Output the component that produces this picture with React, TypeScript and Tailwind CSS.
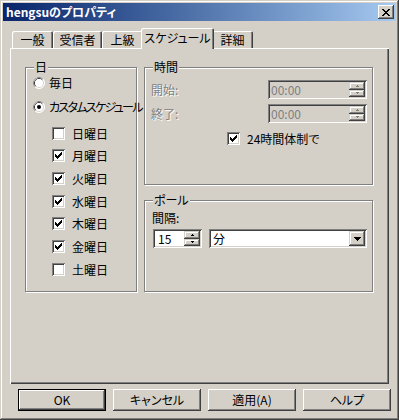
import React from "react";

const RAISED =
  "shadow-[inset_-1px_-1px_#404040,inset_1px_1px_#ffffff,inset_-2px_-2px_#808080,inset_2px_2px_#d4d0c8]";
const RAISED_SMALL =
  "shadow-[inset_-1px_-1px_#404040,inset_1px_1px_#d4d0c8,inset_-2px_-2px_#808080,inset_2px_2px_#ffffff]";
const SUNKEN =
  "shadow-[inset_1px_1px_#808080,inset_-1px_-1px_#ffffff,inset_2px_2px_#404040,inset_-2px_-2px_#d4d0c8]";

function Pixels({ rows, color }: { rows: string[]; color: string }) {
  const w = rows[0].length;
  const h = rows.length;
  const rects: React.ReactNode[] = [];
  rows.forEach((r, y) =>
    r.split("").forEach((c, x) => {
      if (c === "X") rects.push(<rect key={`${x}-${y}`} x={x} y={y} width={1} height={1} fill={color} />);
    })
  );
  return (
    <svg width={w} height={h} viewBox={`0 0 ${w} ${h}`} shapeRendering="crispEdges" className="block">
      {rects}
    </svg>
  );
}

const CHECK = ["......X", ".....XX", "X...XXX", "XX.XXX.", "XXXXX..", ".XXX...", "..X...."];
const CLOSE_X = ["XX....XX", ".XX..XX.", "..XXXX..", "...XX...", "..XXXX..", ".XX..XX.", "XX....XX"];
const DOWN = ["XXXXXXX", ".XXXXX.", "..XXX..", "...X..."];
const UP_TINY = [".X.", "XXX"];
const DOWN_TINY = ["XXX", ".X."];

function Checkbox({ checked }: { checked: boolean }) {
  return (
    <div className={`w-[13px] h-[13px] bg-white ${SUNKEN} flex items-center justify-center shrink-0`}>
      {checked && <Pixels rows={CHECK} color="#000000" />}
    </div>
  );
}

function Radio({ checked }: { checked: boolean }) {
  return (
    <svg width="12" height="12" viewBox="0 0 12 12" className="block shrink-0">
      <circle cx="6" cy="6" r="5.5" fill="#ffffff" stroke="#ffffff" strokeWidth="1" />
      <path d="M2.11 9.89 A5.5 5.5 0 0 1 9.89 2.11" fill="none" stroke="#808080" strokeWidth="1" />
      <circle cx="6" cy="6" r="4.5" fill="none" stroke="#d4d0c8" strokeWidth="1" />
      <path d="M2.82 9.18 A4.5 4.5 0 0 1 9.18 2.82" fill="none" stroke="#404040" strokeWidth="1" />
      <circle cx="6" cy="6" r="3.9" fill="#ffffff" />
      {checked && <circle cx="6" cy="6" r="2" fill="#000000" />}
    </svg>
  );
}

function Group({
  label,
  className,
  children,
}: {
  label: string;
  className: string;
  children?: React.ReactNode;
}) {
  return (
    <div className={`relative border border-[#808080] shadow-[inset_1px_1px_#ffffff,1px_1px_#ffffff] ${className}`}>
      <span className="absolute top-[-7px] left-[8px] bg-[#d4d0c8] px-[1px] leading-[12px]">{label}</span>
      {children}
    </div>
  );
}

function Spinner({ color }: { color: string }) {
  return (
    <div className="flex flex-col w-[16px] h-full shrink-0">
      <div className={`flex-1 bg-[#d4d0c8] ${RAISED_SMALL} flex items-center justify-center`}>
        <Pixels rows={UP_TINY} color={color} />
      </div>
      <div className={`flex-1 bg-[#d4d0c8] ${RAISED_SMALL} flex items-center justify-center`}>
        <Pixels rows={DOWN_TINY} color={color} />
      </div>
    </div>
  );
}

function TimeField() {
  return (
    <div className={`w-[99px] h-[19px] bg-[#d4d0c8] ${SUNKEN} flex items-stretch p-[2px]`}>
      <span className="flex-1 flex items-center pl-[1px] text-[#808080]">00:00</span>
      <Spinner color="#808080" />
    </div>
  );
}

const TABS = [
  { label: "一般", w: "w-[41px]" },
  { label: "受信者", w: "w-[49px]" },
  { label: "上級", w: "w-[41px]" },
  { label: "スケジュール", w: "w-[73px]", active: true },
  { label: "詳細", w: "w-[41px]" },
];

const DAYS = [
  { label: "日曜日", checked: false, h: "h-[22px]" },
  { label: "月曜日", checked: true, h: "h-[23px]" },
  { label: "火曜日", checked: true, h: "h-[23px]" },
  { label: "水曜日", checked: true, h: "h-[22px]" },
  { label: "木曜日", checked: true, h: "h-[23px]" },
  { label: "金曜日", checked: true, h: "h-[23px]" },
  { label: "土曜日", checked: false, h: "h-[23px]" },
];

export default function App() {
  return (
    <div
      className={`w-[399px] h-[420px] bg-[#d4d0c8] p-[3px] flex flex-col overflow-hidden select-none text-black text-[12px] leading-none font-['Noto_Sans_CJK_JP',sans-serif] [font-feature-settings:'palt'] ${RAISED_SMALL}`}
    >
      {/* Title bar */}
      <div className="h-[18px] flex items-center bg-linear-to-r from-[#0a246a] to-[#a6caf0] pl-[3px] pr-[2px] shrink-0">
        <span className="flex-1 text-white font-bold text-[12px] leading-none">hengsuのプロパティ</span>
        <div className={`w-[16px] h-[14px] bg-[#d4d0c8] ${RAISED} flex items-center justify-center`}>
          <Pixels rows={CLOSE_X} color="#000000" />
        </div>
      </div>

      {/* Tab strip */}
      <div className="h-[27px] flex items-end pl-[7px] relative z-10 shrink-0">
        {TABS.map((t, i) =>
          t.active ? (
            <div
              key={t.label}
              className={`${t.w} h-[21px] mb-[-1px] ml-[-2px] bg-[#d4d0c8] rounded-t-[2px] shadow-[inset_1px_1px_#ffffff,inset_-1px_0_#404040,inset_-2px_0_#808080] flex items-center justify-center pb-[2px] relative z-20`}
            >
              {t.label}
            </div>
          ) : (
            <div
              key={t.label}
              className={`${t.w} h-[17px] ${i === 0 ? "ml-[2px]" : ""} ${i === 4 ? "ml-[-2px]" : ""} bg-[#d4d0c8] rounded-t-[2px] shadow-[inset_1px_1px_#ffffff,inset_-1px_0_#404040,inset_-2px_0_#808080] flex items-center justify-center`}
            >
              {t.label}
            </div>
          )
        )}
      </div>

      {/* Tab panel */}
      <div className="ml-[7px] w-[379px] h-[336px] shrink-0 shadow-[inset_1px_1px_#ffffff,inset_-1px_-1px_#404040,inset_-2px_-2px_#808080] pt-[19px] pl-[15px] flex items-start gap-[7px]">
        {/* Left group: 日 */}
        <Group label="日" className="w-[112px] h-[225px] shrink-0">
          <div className="flex flex-col pt-[3px]">
            <div className="h-[24px] flex items-center pl-[7px] gap-[4px]">
              <Radio checked={false} />
              <span>毎日</span>
            </div>
            <div className="h-[24px] flex items-center pl-[7px] gap-[4px] whitespace-nowrap">
              <Radio checked={true} />
              <span className="tracking-[-1.7px]">カスタムスケジュール</span>
            </div>
            <div className="flex flex-col mt-[3px]">
              {DAYS.map((d) => (
                <div key={d.label} className={`${d.h} flex items-start pt-[5px] pl-[26px] gap-[7px]`}>
                  <Checkbox checked={d.checked} />
                  <span className="leading-[13px]">{d.label}</span>
                </div>
              ))}
            </div>
          </div>
        </Group>

        {/* Right column */}
        <div className="flex flex-col gap-[15px]">
          <Group label="時間" className="w-[229px] h-[118px]">
            <div className="flex flex-col pt-[12px]">
              <div className="flex items-center h-[19px] pl-[6px]">
                <span className="w-[117px] text-[#808080] [text-shadow:1px_1px_#ffffff]">開始:</span>
                <TimeField />
              </div>
              <div className="flex items-center h-[19px] pl-[6px] mt-[5px]">
                <span className="w-[117px] text-[#808080] [text-shadow:1px_1px_#ffffff]">終了:</span>
                <TimeField />
              </div>
              <div className="flex items-center mt-[9px] pl-[82px] gap-[7px]">
                <Checkbox checked={true} />
                <span>24時間体制で</span>
              </div>
            </div>
          </Group>

          <Group label="ポール" className="w-[229px] h-[92px]">
            <div className="flex flex-col pt-[11px]">
              <span className="pl-[7px] leading-[12px]">間隔:</span>
              <div className="flex items-center mt-[5px] pl-[8px] gap-[7px]">
                <div className={`w-[49px] h-[19px] bg-white ${SUNKEN} flex items-stretch p-[2px]`}>
                  <span className="flex-1 flex items-center pl-[3px]">15</span>
                  <Spinner color="#000000" />
                </div>
                <div className={`w-[158px] h-[19px] bg-white ${SUNKEN} flex items-stretch p-[2px]`}>
                  <span className="flex-1 flex items-center pl-[2px]">分</span>
                  <div className={`w-[16px] bg-[#d4d0c8] ${RAISED_SMALL} flex items-center justify-center`}>
                    <Pixels rows={DOWN} color="#000000" />
                  </div>
                </div>
              </div>
            </div>
          </Group>
        </div>
      </div>

      {/* Buttons */}
      <div className="mt-[5px] flex pl-[15px] gap-[7px] shrink-0">
        <div className="w-[88px] h-[22px] border border-black bg-[#d4d0c8] shadow-[inset_-1px_-1px_#404040,inset_1px_1px_#ffffff,inset_-2px_-2px_#808080] flex items-center justify-center">
          OK
        </div>
        {["キャンセル", "適用(A)", "ヘルプ"].map((b) => (
          <div key={b} className={`w-[88px] h-[22px] bg-[#d4d0c8] ${RAISED} flex items-center justify-center`}>
            {b}
          </div>
        ))}
      </div>
    </div>
  );
}
